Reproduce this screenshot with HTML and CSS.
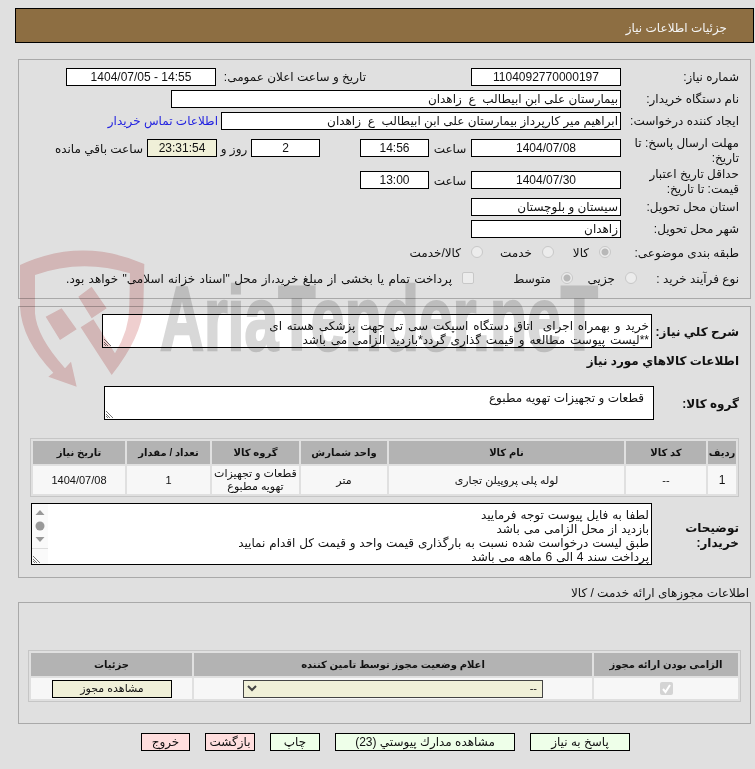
FILE: index.html
```html
<!DOCTYPE html>
<html lang="fa" dir="rtl">
<head>
  <meta charset="UTF-8" />
  <title>جزئیات اطلاعات نیاز</title>
  <link rel="stylesheet" href="styles.css">
</head>
<body>
  <div class="page-title">جزئیات اطلاعات نیاز</div>

  <section class="panel panel-info">
    <div class="row">
      <span class="label">شماره نیاز:</span>
      <div class="field w150 center">1104092770000197</div>
      <span class="label-inline announce">تاریخ و ساعت اعلان عمومی:</span>
      <div class="field w150 center" dir="ltr">1404/07/05 - 14:55</div>
    </div>
    <div class="row">
      <span class="label">نام دستگاه خریدار:</span>
      <div class="field w450">بیمارستان علی ابن ابیطالب&nbsp; ع&nbsp; زاهدان</div>
    </div>
    <div class="row">
      <span class="label">ایجاد کننده درخواست:</span>
      <div class="field w400">ابراهیم میر کارپرداز بیمارستان علی ابن ابیطالب&nbsp; ع&nbsp; زاهدان</div>
      <a class="contact" href="#">اطلاعات تماس خریدار</a>
    </div>
    <div class="row row-deadline">
      <span class="label label-wrap">مهلت ارسال پاسخ: تا تاریخ:</span>
      <div class="field w150 center">1404/07/08</div>
      <span class="time-word">ساعت</span>
      <div class="field w69 center">14:56</div>
      <div class="field w69 center days">2</div>
      <span class="days-word">روز و</span>
      <div class="field w70 center timer">23:31:54</div>
      <span class="remain">ساعت باقي مانده</span>
    </div>
    <div class="row row-validity">
      <span class="label label-wrap">حداقل تاریخ اعتبار قیمت: تا تاریخ:</span>
      <div class="field w150 center">1404/07/30</div>
      <span class="time-word">ساعت</span>
      <div class="field w69 center">13:00</div>
    </div>
    <div class="row">
      <span class="label">استان محل تحویل:</span>
      <div class="field w150">سیستان و بلوچستان</div>
    </div>
    <div class="row">
      <span class="label">شهر محل تحویل:</span>
      <div class="field w150">زاهدان</div>
    </div>
    <div class="row row-options">
      <span class="label">طبقه بندی موضوعی:</span>
      <label class="option opt-goods"><input type="radio" name="kind" checked disabled>کالا</label>
      <label class="option opt-service"><input type="radio" name="kind" disabled>خدمت</label>
      <label class="option"><input type="radio" name="kind" disabled>کالا/خدمت</label>
    </div>
    <div class="row row-options row-process">
      <span class="label label-process">نوع فرآیند خرید :</span>
      <label class="option opt-minor"><input type="radio" name="proc" disabled>جزیی</label>
      <label class="option opt-medium"><input type="radio" name="proc" checked disabled>متوسط</label>
      <label class="option pay-note"><input type="checkbox" disabled>پرداخت تمام یا بخشی از مبلغ خرید،از محل "اسناد خزانه اسلامی" خواهد بود.</label>
    </div>
  </section>

  <section class="panel panel-goods">
    <div class="row-box">
      <b class="box-label">شرح کلي نياز:</b>
      <div class="box box-desc">خرید و بهمراه اجرای&nbsp; اتاق دستگاه اسپکت سی تی جهت پزشکی هسته ای<br>**لیست پیوست مطالعه و قیمت گذاری گردد*بازدید الزامی می باشد
        <svg class="grip" width="8" height="8" viewBox="0 0 8 8"><path d="M0 1l7 7M0 4l4 4M0 6l2 2" stroke="#777" fill="none"/></svg>
      </div>
    </div>
    <b class="goods-title">اطلاعات کالاهاي مورد نياز</b>
    <div class="row-box">
      <b class="box-label group-label">گروه کالا:</b>
      <div class="box box-group">قطعات و تجهیزات تهویه مطبوع
        <svg class="grip" width="8" height="8" viewBox="0 0 8 8"><path d="M0 1l7 7M0 4l4 4M0 6l2 2" stroke="#777" fill="none"/></svg>
      </div>
    </div>

    <table class="grid goods-grid">
      <colgroup>
        <col class="c1"><col class="c2"><col class="c3"><col class="c4"><col class="c5"><col class="c6"><col class="c7">
      </colgroup>
      <tr><th>ردیف</th><th>کد کالا</th><th>نام کالا</th><th>واحد شمارش</th><th>گروه کالا</th><th>تعداد / مقدار</th><th>تاریخ نیاز</th></tr>
      <tr><td class="num">1</td><td>--</td><td>لوله پلی پروپیلن تجاری</td><td>متر</td><td>قطعات و تجهیزات<br>تهویه مطبوع</td><td>1</td><td>1404/07/08</td></tr>
    </table>

    <div class="row-box buyer-row">
      <b class="box-label buyer-label">توضیحات خریدار:</b>
      <div class="box box-buyer">
        <div class="buyer-text">لطفا به فایل پیوست توجه فرمایید<br>بازدید از محل الزامی می باشد<br>طبق لیست درخواست شده نسبت به بارگذاری قیمت واحد و قیمت کل اقدام نمایید<br>پرداخت سند 4 الی 6 ماهه می باشد</div>
        <div class="scroll">
          <svg width="16" height="46" viewBox="0 0 16 46">
            <path d="M3.5 11l4.5-5 4.5 5z" fill="#999"/>
            <circle cx="8" cy="22" r="4.5" fill="#999"/>
            <path d="M3.5 33h9l-4.5 5z" fill="#999"/>
          </svg>
          <svg class="grip" width="8" height="8" viewBox="0 0 8 8"><path d="M0 1l7 7M0 4l4 4M0 6l2 2" stroke="#777" fill="none"/></svg>
        </div>
      </div>
    </div>
  </section>

  <div class="permits-title">اطلاعات مجوزهای ارائه خدمت / کالا</div>

  <section class="panel panel-permits">
    <table class="grid permits-grid">
      <colgroup><col class="p1"><col class="p2"><col class="p3"></colgroup>
      <tr><th>الزامی بودن ارائه مجوز</th><th>اعلام وضعیت مجوز توسط تامین کننده</th><th>جزئیات</th></tr>
      <tr>
        <td>
          <span class="tick"><svg width="13" height="13" viewBox="0 0 13 13"><path d="M3 7l2.5 3L10 3" stroke="#fff" stroke-width="2" fill="none"/></svg></span>
        </td>
        <td>
          <div class="select">
            <span>--</span>
            <svg width="10" height="7" viewBox="0 0 10 7"><path d="M1 1l4 4 4-4" stroke="#444" stroke-width="2" fill="none"/></svg>
          </div>
        </td>
        <td><button class="btn-permit">مشاهده مجوز</button></td>
      </tr>
    </table>
  </section>

  <div class="actions">
    <button class="btn b-reply">پاسخ به نیاز</button>
    <button class="btn b-docs">مشاهده مدارك پيوستي (23)</button>
    <button class="btn b-print">چاپ</button>
    <button class="btn b-back danger">بازگشت</button>
    <button class="btn b-exit danger">خروج</button>
  </div>

  <!-- site watermark, lies over the whole form -->
  <svg class="watermark" width="755" height="769" viewBox="0 0 755 769">
    <g transform="translate(10 240) scale(0.3333)">
      <path fill="#efcfcf" d="M30 75Q215 -10 403 72L400 200Q395 290 305 405L212 262 250 238 315 340Q358 270 358 200L360 100Q215 55 75 105L75 220Q80 290 165 385L183 365 200 440 115 410 130 398Q35 300 30 200Z"/>
      <path fill="#efcfcf" d="M107 230L155 205 200 268 150 300ZM205 170L245 140 290 205 245 235Z"/>
    </g>
    <text x="160" y="350" class="watermark-text" textLength="438" lengthAdjust="spacingAndGlyphs">AriaTender.neT</text>
  </svg>
</body>
</html>
```

FILE: styles.css
```css
* {
  box-sizing: border-box;
}

html, body {
  height: 769px;
  overflow: hidden;
}

body {
  position: relative;
  margin: 0;
  background-color: #e0e0e0;
  color: #111;
  font-family: "Liberation Sans", "DejaVu Sans", sans-serif;
  font-size: 12px;
  line-height: 14px;
}

.page-title {
  height: 35px;
  margin: 8px 1px 0 15px;
  padding: 0 26px 0 0;
  border: 1px solid #000;
  background-color: #8d6e42;
  color: #f4f4f4;
  line-height: 38px;
}

.panel {
  margin: 0 4px 0 18px;
  border: 1px solid #a9a9a9;
}

.panel-info {
  height: 240px;
  margin-top: 16px;
  padding: 8px 11px 0 0;
}

.panel-goods {
  height: 272px;
  margin-top: 7px;
  padding: 7px 11px 0 0;
}

.panel-permits {
  height: 122px;
  padding: 47px 9px 0 0;
}

/* form rows */
.row {
  display: flex;
  align-items: center;
  height: 18px;
  margin-bottom: 4px;
}

.label {
  flex: none;
  width: 118px;
}

.label-wrap {
  align-self: flex-start;
  padding-left: 8px;
  line-height: 15px;
}

.field {
  flex: none;
  height: 18px;
  padding: 0 2px;
  border: 1px solid #000;
  background-color: #fff;
  line-height: 16px;
}

.center {
  text-align: center;
}

.w69 { width: 69px; }
.w70 { width: 70px; }
.w150 { width: 150px; }
.w400 { width: 400px; }
.w450 { width: 450px; }

.announce {
  width: 150px;
  margin-right: 105px;
}

.contact {
  margin-right: 3px;
  color: #2323e0;
  text-decoration: none;
}

.row-deadline {
  height: 32px;
  margin: 9px 0 0;
  align-items: flex-start;
}

.row-deadline .label {
  margin-top: -3px;
}

.row-validity {
  height: 27px;
  margin: 0;
  align-items: flex-start;
}

.row-validity .label {
  margin-top: -4px;
}

.time-word {
  width: 42px;
  line-height: 21px;
  text-align: center;
}

.days {
  margin-right: 40px;
}

.days-word {
  width: 34px;
  line-height: 21px;
  text-align: center;
}

.timer {
  background-color: #f0f0d8;
}

.remain {
  margin-right: 4px;
  line-height: 21px;
}

.row-options {
  height: 22px;
  margin: 0;
}

.row-process {
  margin-top: 4px;
}

.label-process {
  width: 102px;
}

.option {
  display: flex;
  align-items: center;
  flex: none;
  gap: 10px;
}

.row-options .label + .option:not(.opt-minor) {
  margin-right: 10px;
}

.opt-goods { width: 57px; }
.opt-service { width: 71px; }
.opt-minor { width: 64px; }
.opt-medium { width: 99px; }

.pay-note {
  word-spacing: 1px;
}

.option input {
  appearance: none;
  flex: none;
  width: 12px;
  height: 12px;
  margin: -3px 0 0;
  border: 1px solid #c8c8c8;
  background-color: #ececec;
}

.option input[type="radio"] {
  border-radius: 50%;
}

.option input[type="radio"]:checked {
  background: radial-gradient(circle, #b8b8b8 0 3px, #ececec 4px);
}

.option input[type="checkbox"] {
  border-radius: 2px;
}

/* text boxes */
.row-box {
  display: flex;
}

.box-label {
  flex: none;
  width: 87px;
  padding-top: 11px;
}

.box {
  position: relative;
  width: 550px;
  height: 34px;
  border: 1px solid #000;
  background-color: #fff;
}

.box-desc {
  padding: 4px 2px 0 0;
  word-spacing: 1.5px;
}

.goods-title {
  display: block;
  height: 38px;
  padding-top: 6px;
}

.group-label {
  width: 85px;
  padding-top: 11px;
}

.box-group {
  padding: 4px 9px 0 0;
}

.grip {
  position: absolute;
  bottom: 1px;
  left: 1px;
}

/* tables */
.grid {
  border: 1px solid #c6c6c6;
  border-spacing: 2px;
  table-layout: fixed;
  text-align: center;
}

.grid th {
  height: 23px;
  padding: 0;
  background-color: #b3b3b3;
  font-size: 10px;
  white-space: nowrap;
}

.grid td {
  padding: 0;
  background-color: #f7f7f7;
  font-size: 11px;
  line-height: 13px;
}

.goods-grid {
  width: 707px;
  margin-top: 18px;
}

.goods-grid td {
  height: 28px;
}

.goods-grid .num {
  font-size: 12px;
}

.c1 { width: 28px; }
.c2 { width: 80px; }
.c3 { width: 235px; }
.c4 { width: 86px; }
.c5 { width: 87px; }
.c6 { width: 83px; }
.c7 { width: 92px; }

.buyer-row {
  margin-top: 6px;
}

.buyer-label {
  padding-top: 18px;
  padding-left: 20px;
  line-height: 15px;
}

.box-buyer {
  display: flex;
  width: 621px;
  height: 62px;
  word-spacing: 0.5px;
}

.buyer-text {
  flex: 1;
  padding: 4px 2px 0 0;
}

.scroll {
  position: relative;
  flex: none;
  width: 16px;
  background-color: #fafafa;
}

.scroll::after {
  content: "";
  position: absolute;
  left: 0;
  right: 0;
  bottom: 15px;
  border-top: 1px solid #ddd;
}

.permits-title {
  height: 24px;
  margin-right: 6px;
  padding-top: 8px;
}

.permits-grid {
  width: 712px;
}

.permits-grid td {
  height: 21px;
}

.p1 { width: 144px; }
.p2 { width: 398px; }
.p3 { width: 161px; }

.tick {
  display: inline-block;
  width: 13px;
  height: 13px;
  margin-top: 3px;
  border-radius: 2px;
  background-color: #d4d4d4;
}

.select {
  display: flex;
  align-items: center;
  justify-content: space-between;
  width: 300px;
  height: 18px;
  margin: 0 49px 0 0;
  padding: 0 5px 0 3px;
  border: 1px solid #444;
  background-color: #f0f0d8;
}

.btn-permit {
  display: block;
  width: 120px;
  height: 18px;
  margin: 0 20px 0 0;
  padding: 0;
  border: 1px solid #000;
  background-color: #f0f0d8;
  color: #111;
  font: inherit;
}

/* bottom buttons */
.actions {
  display: flex;
  gap: 15px;
  margin: 9px 125px 0 0;
}

.btn {
  height: 18px;
  padding: 0;
  border: 1px solid #000;
  background-color: #eeffe9;
  color: #111;
  font: inherit;
}

.danger {
  background-color: #ffdede;
}

.b-reply { width: 100px; }
.b-docs { width: 180px; }
.b-print { width: 50px; }
.b-back { width: 50px; }
.b-exit { width: 49px; }

.watermark {
  position: absolute;
  top: 0;
  left: 0;
  direction: ltr;
  pointer-events: none;
  mix-blend-mode: multiply;
}

.watermark-text {
  direction: ltr;
  fill: #d8d8d8;
  stroke: #d8d8d8;
  stroke-width: 2.5px;
  font-family: "Liberation Sans", sans-serif;
  font-size: 90px;
  font-weight: bold;
}
```
